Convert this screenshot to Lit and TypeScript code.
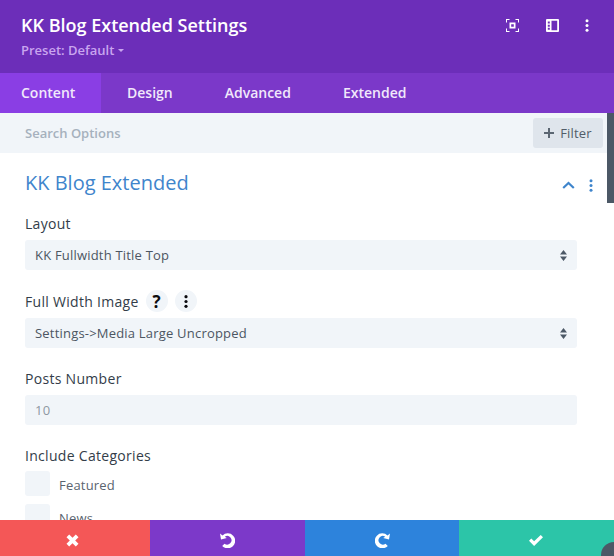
import { LitElement, html, css } from "lit";
import { customElement } from "lit/decorators.js";

@customElement("app-root")
export class AppRoot extends LitElement {
  static styles = css`
    :host { display: flex; flex-direction: column; position: relative; width: 614px; height: 556px; overflow: hidden; background: #fff; font-family: "Open Sans", sans-serif; color: #4c5866; }
    * { box-sizing: border-box; }
    .head { height: 73px; flex: none; background: #6c2eb9; padding: 0 25px 0 21px; display: flex; justify-content: space-between; }
    .title { margin-top: 13px; font-size: 18px; line-height: 25px; font-weight: 600; color: #fff; }
    .preset { margin-top: 2px; font-size: 13px; line-height: 20px; font-weight: 600; color: #c9a5ef; display: flex; align-items: center; gap: 4px; }
    .caret { width: 0; height: 0; border: 3px solid transparent; border-top: 3px solid #c9a5ef; margin-top: 3px; }
    .actions { display: flex; align-items: center; height: 50px; }
    .actions svg { display: block; fill: #fff; }
    .a1 { margin-right: 27px; }
    .a2 { margin-right: 26px; }
    .tabs { height: 40px; flex: none; background: #7b38c9; display: flex; }
    .tab { height: 40px; line-height: 40px; font-size: 14px; font-weight: 600; color: #f1e8fb; padding: 0 26px; }
    .tab.on { background: #8a3ee4; padding: 0 21px; width: 101px; }
    .search { height: 40px; flex: none; background: #f1f5f9; display: flex; align-items: center; justify-content: space-between; padding: 0 11px 0 25px; font-size: 13px; font-weight: 600; color: #a6b1bd; }
    .filter { width: 70px; height: 30px; background: #dfe5ec; border-radius: 3px; display: flex; align-items: center; justify-content: center; gap: 6px; color: #515c68; font-size: 13px; font-weight: 500; letter-spacing: .2px; }
    .body { flex: 1; min-height: 0; overflow: hidden; padding: 17px 37px 0 25px; }
    .sec { display: flex; align-items: center; justify-content: space-between; height: 27px; margin-right: -16px; }
    .sec h2 { margin: -2px 0 0; font-size: 20px; font-weight: 400; color: #3f85cc; line-height: 27px; }
    .sec-icons { display: flex; align-items: center; gap: 14px; padding-top: 3px; }
    .sec-icons svg { display: block; }
    .label { display: flex; align-items: center; height: 24px; font-size: 14px; font-weight: 500; letter-spacing: .3px; color: #333d49; gap: 7px; }
    .circle { width: 22px; height: 22px; border-radius: 50%; background: #f1f5f9; display: flex; align-items: center; justify-content: center; color: #0b0b0f; font-size: 17px; font-weight: 700; letter-spacing: 0; }
    .circle svg { display: block; }
    .field { height: 30px; margin-top: 5px; background: #f1f5f9; border-radius: 3px; display: flex; align-items: center; justify-content: space-between; padding: 0 10px; font-size: 13px; font-weight: 500; letter-spacing: .2px; color: #4c5662; }
    .field.num { color: #8e98a3; }
    .group { margin-bottom: 18px; }
    .group.first { margin-top: 14px; margin-bottom: 19px; }
    .check { display: flex; align-items: center; gap: 9px; height: 25px; margin-bottom: 8px; font-size: 13px; font-weight: 500; letter-spacing: .2px; color: #5a646f; }
    .check span:last-child { padding-top: 3px; }
    .box { width: 25px; height: 25px; border-radius: 3px; background: #f1f5f9; flex: none; }
    .check.first { margin-top: 4px; }
    .foot { height: 36px; flex: none; display: flex; }
    .foot div { display: flex; align-items: center; justify-content: center; padding-top: 4px; }
    .foot svg { display: block; fill: #fff; }
    .f1 { width: 150px; background: #f45757; padding-right: 6px; }
    .f2 { width: 155px; background: #7c39c9; }
    .f3 { width: 154px; background: #2d83dc; }
    .f4 { width: 155px; background: #2cc5a8; padding-right: 2px; }
    .scroll { position: absolute; right: 0; top: 113px; width: 7px; height: 90px; background: #4c5866; }
    .blob { position: absolute; right: -13px; bottom: -12px; width: 26px; height: 26px; border-radius: 50%; background: #4c5866; }
  `;

  render() {
    return html`
      <div class="head">
        <div>
          <div class="title">KK Blog Extended Settings</div>
          <div class="preset">Preset: Default <span class="caret"></span></div>
        </div>
        <div class="actions">
          <svg class="a1" width="13" height="13" viewBox="0 0 13 13"><path d="M0 0h3.500v1H1v2.500H0zM9.500 0H13v3.500h-1V1H9.500zM0 9.500h1V12h2.500v1H0zM12 9.500h1V13H9.500v-1H12z"/><path fill-rule="evenodd" d="M3.500 3.500h6v6h-6zM5.200 5.200v2.600h2.600V5.200z"/></svg>
          <svg class="a2" width="13" height="13" viewBox="0 0 13 13"><path fill-rule="evenodd" d="M1 0h11a1 1 0 0 1 1 1v11a1 1 0 0 1-1 1H1a1 1 0 0 1-1-1V1a1 1 0 0 1 1-1zM5.500 1.800v9.400h5.700V1.800zM1.800 2.500v2h2v-2zM1.800 5.700v2h2v-2zM1.800 8.700v2h2v-2z"/></svg>
          <svg class="a3" width="4" height="13" viewBox="0 0 4 13"><circle cx="2" cy="1.700" r="1.500"/><circle cx="2" cy="6.500" r="1.500"/><circle cx="2" cy="11.300" r="1.500"/></svg>
        </div>
      </div>
      <div class="tabs">
        <div class="tab on">Content</div>
        <div class="tab">Design</div>
        <div class="tab">Advanced</div>
        <div class="tab">Extended</div>
      </div>
      <div class="search">
        <span>Search Options</span>
        <div class="filter">
          <svg width="10" height="10" viewBox="0 0 10 10"><path d="M4 0h2v4h4v2H6v4H4V6H0V4h4z" fill="#5b6672"/></svg>
          <span>Filter</span>
        </div>
      </div>
      <div class="body">
        <div class="sec">
          <h2>KK Blog Extended</h2>
          <div class="sec-icons">
            <svg width="13" height="8" viewBox="0 0 13 8"><path d="M1.200 7L6.500 2l5.300 5" fill="none" stroke="#3f85cc" stroke-width="2.200"/></svg>
            <svg width="4" height="13" viewBox="0 0 4 13"><g fill="#3f85cc"><circle cx="2" cy="1.700" r="1.500"/><circle cx="2" cy="6.500" r="1.500"/><circle cx="2" cy="11.300" r="1.500"/></g></svg>
          </div>
        </div>
        <div class="group first">
          <div class="label">Layout</div>
          <div class="field"><span>KK Fullwidth Title Top</span>${this.updown()}</div>
        </div>
        <div class="group">
          <div class="label">Full Width Image
            <span class="circle">?</span>
            <span class="circle"><svg width="4" height="13" viewBox="0 0 4 13"><g fill="#0b0b0f"><circle cx="2" cy="1.700" r="1.600"/><circle cx="2" cy="6.500" r="1.600"/><circle cx="2" cy="11.300" r="1.600"/></g></svg></span>
          </div>
          <div class="field"><span>Settings-&gt;Media Large Uncropped</span>${this.updown()}</div>
        </div>
        <div class="group">
          <div class="label">Posts Number</div>
          <div class="field num"><span>10</span></div>
        </div>
        <div>
          <div class="label">Include Categories</div>
          <div class="check first"><span class="box"></span><span>Featured</span></div>
          <div class="check"><span class="box"></span><span>News</span></div>
        </div>
      </div>
      <div class="foot">
        <div class="f1"><svg width="13" height="13" viewBox="0 0 13 13"><path d="M3.200.5L6.500 3.800 9.800.5l2.700 2.700L9.200 6.500l3.300 3.300-2.700 2.700-3.300-3.300-3.300 3.300L.5 9.800l3.300-3.300L.5 3.200z"/></svg></div>
        <div class="f2"><svg width="15" height="15" viewBox="0 0 15 15"><path d="M0 .5l1 6 5.800-1.400-2-1.400A4.300 4.300 0 1 1 4.500 10.700l-2.300 2.200A7.500 7.500 0 1 0 2.500 2.400z"/></svg></div>
        <div class="f3"><svg width="15" height="15" viewBox="0 0 15 15"><path d="M15 .5l-1 6-5.800-1.400 2-1.400A4.300 4.300 0 1 0 10.500 10.700l2.300 2.200A7.500 7.500 0 1 1 12.500 2.400z"/></svg></div>
        <div class="f4"><svg width="14" height="11" viewBox="0 0 14 11"><path d="M0 5.800l2.300-2.300 2.800 2.800L11.700 0 14 2.300 5.100 11z"/></svg></div>
      </div>
      <div class="scroll"></div>
      <div class="blob"></div>
    `;
  }

  updown() {
    return html`<svg width="7" height="11" viewBox="0 0 7 11" style="display:block"><path d="M3.500 0L7 4.500H0zM0 6.500h7L3.500 11z" fill="#4c5866"/></svg>`;
  }
}
